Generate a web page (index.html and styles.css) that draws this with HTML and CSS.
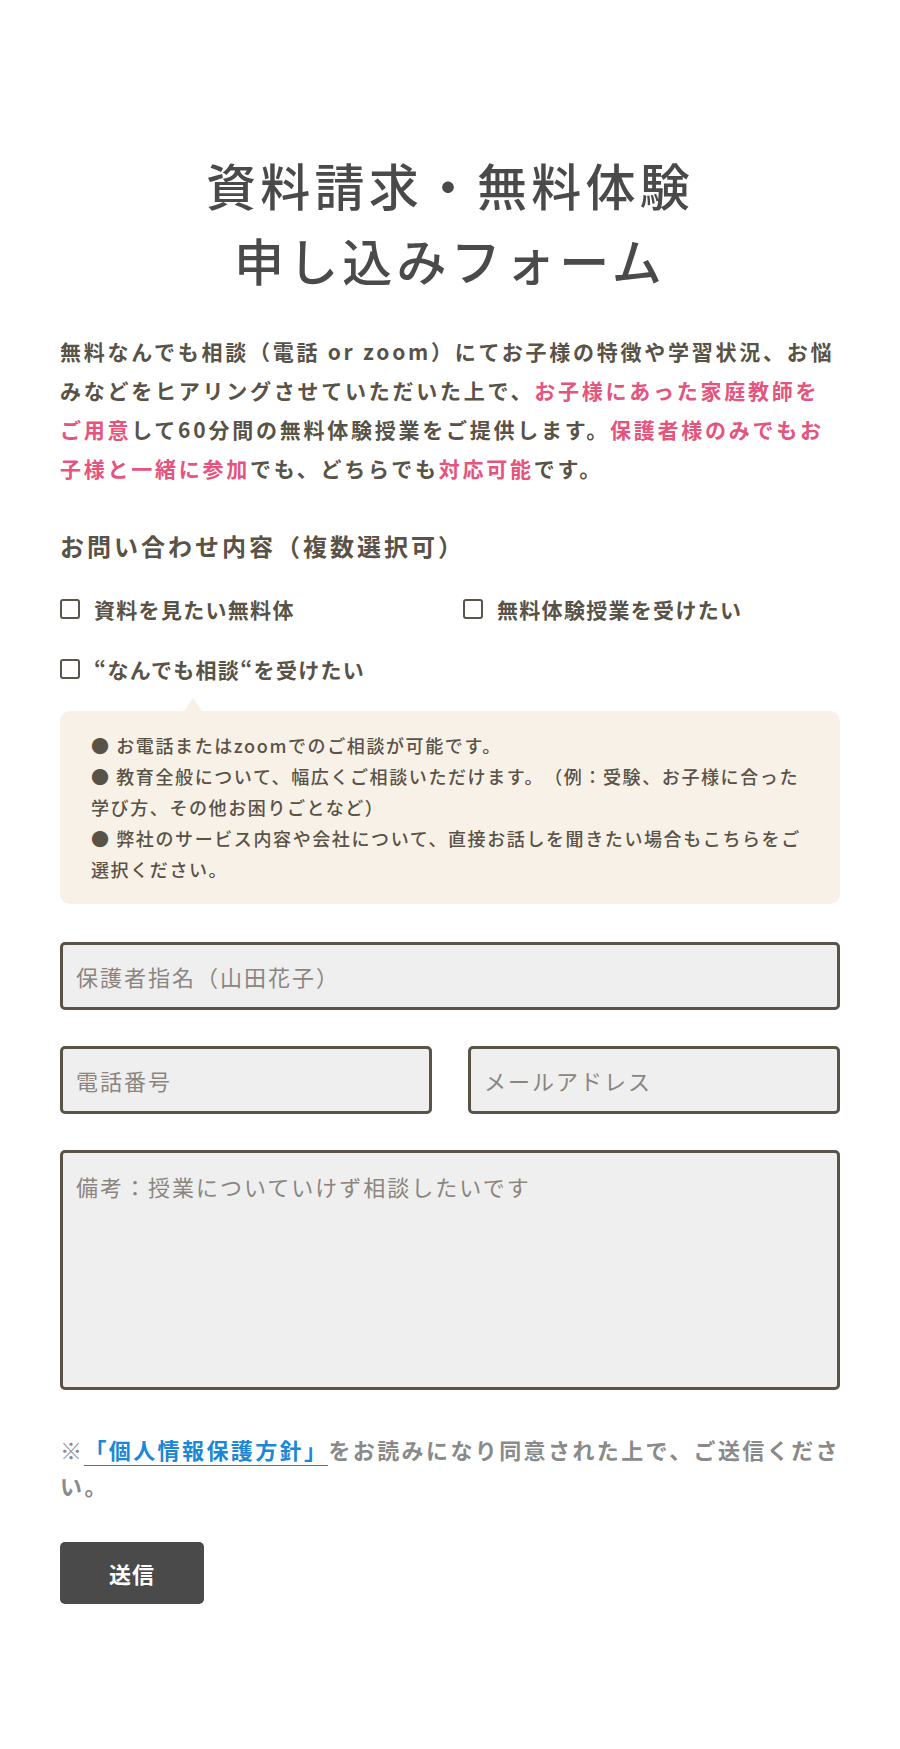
FILE: index.html
```html
<!DOCTYPE html>
<html lang="ja">
<head>
    <meta charset="UTF-8">
    <meta name="viewport" content="width=device-width, initial-scale=1.0">
    <title>資料請求・無料体験 申し込みフォーム</title>
    <link rel="stylesheet" href="styles.css">
</head>
<body>
    <main class="form-wrap">
        <h1 class="form-title">資料請求・無料体験<br>申し込みフォーム</h1>
        <p class="lead">無料なんでも相談（電話 or zoom）にてお子様の特徴や学習状況、お悩みなどをヒアリングさせていただいた上で、<span class="pink">お子様にあった家庭教師をご用意</span>して60分間の無料体験授業をご提供します。<span class="pink">保護者様のみでもお子様と一緒に参加</span>でも、どちらでも<span class="pink">対応可能</span>です。</p>

        <form class="contact-form" onsubmit="return false;">
            <h2 class="field-title">お問い合わせ内容（複数選択可）</h2>
            <div class="choices">
                <label class="choice"><input type="checkbox" name="type" value="doc"><span>資料を見たい無料体</span></label>
                <label class="choice"><input type="checkbox" name="type" value="trial"><span>無料体験授業を受けたい</span></label>
                <label class="choice"><input type="checkbox" name="type" value="consult"><span>“なんでも相談“を受けたい</span></label>
            </div>
            <div class="balloon">
                <p>● お電話またはzoomでのご相談が可能です。</p>
                <p>● 教育全般について、幅広くご相談いただけます。（例：受験、お子様に合った学び方、その他お困りごとなど）</p>
                <p>● 弊社のサービス内容や会社について、直接お話しを聞きたい場合もこちらをご選択ください。</p>
            </div>

            <input class="field" type="text" placeholder="保護者指名（山田花子）">
            <div class="field-row">
                <input class="field" type="tel" placeholder="電話番号">
                <input class="field" type="email" placeholder="メールアドレス">
            </div>
            <textarea class="field memo" placeholder="備考：授業についていけず相談したいです"></textarea>

            <p class="privacy">※<a href="#">「個人情報保護方針」</a>をお読みになり同意された上で、ご送信ください。</p>
            <button class="send-btn" type="submit">送信</button>
        </form>
    </main>
</body>
</html>
```

FILE: styles.css
```css
body {
    margin: 0;
    background: #fff;
    font-family: "Noto Sans CJK JP", "Noto Sans", sans-serif;
    color: #595247;
    text-spacing-trim: space-all;
}
.form-wrap {
    width: 780px;
    margin: 0 auto;
    padding: 147px 0 145px;
}
.form-title {
    margin: 0;
    text-align: center;
    font-size: 50px;
    font-weight: 500;
    line-height: 75px;
    letter-spacing: 4.2px;
    color: #4a4a4a;
}
.lead {
    margin: 35px 0 0;
    font-size: 21px;
    font-weight: 700;
    line-height: 39px;
    letter-spacing: 2.75px;
}
.pink {
    color: #e5547d;
}
.field-title {
    margin: 40px 0 0;
    font-size: 24px;
    font-weight: 700;
    line-height: 36px;
    letter-spacing: 3px;
}
.choices {
    display: grid;
    grid-template-columns: 403px 1fr;
    row-gap: 30px;
    margin-top: 30px;
}
.choice {
    display: flex;
    align-items: center;
    gap: 14px;
    font-size: 21px;
    font-weight: 700;
    line-height: 30px;
    letter-spacing: 1.3px;
}
.choice input {
    appearance: none;
    -webkit-appearance: none;
    width: 20px;
    height: 20px;
    margin: 0;
    border: 2px solid #5a544a;
    border-radius: 3px;
    background: #fff;
    flex-shrink: 0;
}
.choice input:checked {
    background: #5a544a;
}
.balloon {
    position: relative;
    margin-top: 27px;
    padding: 19px 31px;
    background: #f8f1e7;
    border-radius: 10px;
    font-size: 18px;
    font-weight: 500;
    line-height: 31px;
    letter-spacing: 1.6px;
}
.balloon::before {
    content: "";
    position: absolute;
    top: -13px;
    left: 124px;
    border-left: 9px solid transparent;
    border-right: 9px solid transparent;
    border-bottom: 13px solid #f8f1e7;
}
.balloon p {
    margin: 0;
}
.field {
    display: block;
    box-sizing: border-box;
    width: 100%;
    height: 68px;
    margin-top: 38px;
    padding: 0 13px;
    border: 3px solid #5a5448;
    border-radius: 5px;
    background: #efefef;
    font-family: inherit;
    font-size: 22px;
    letter-spacing: 2px;
    color: #595247;
}
.field::placeholder {
    color: #8b8580;
}
.field-row {
    display: flex;
    gap: 36px;
    margin-top: 36px;
}
.field-row .field {
    margin-top: 0;
}
.memo {
    height: 240px;
    margin-top: 36px;
    padding: 16px 13px;
    resize: none;
    line-height: 34px;
}
.privacy {
    margin: 41px 0 0;
    font-size: 22px;
    font-weight: 700;
    line-height: 36px;
    letter-spacing: 2.4px;
    color: #8a8a8a;
}
.privacy a {
    color: #1a88d6;
    text-decoration: none;
    border-bottom: 1px solid #1a88d6;
}
.send-btn {
    display: block;
    width: 144px;
    height: 62px;
    margin-top: 39px;
    border: none;
    border-radius: 5px;
    background: #4a4a4a;
    color: #fff;
    font-family: inherit;
    font-size: 22px;
    font-weight: 700;
    letter-spacing: 1px;
    cursor: pointer;
}
```
